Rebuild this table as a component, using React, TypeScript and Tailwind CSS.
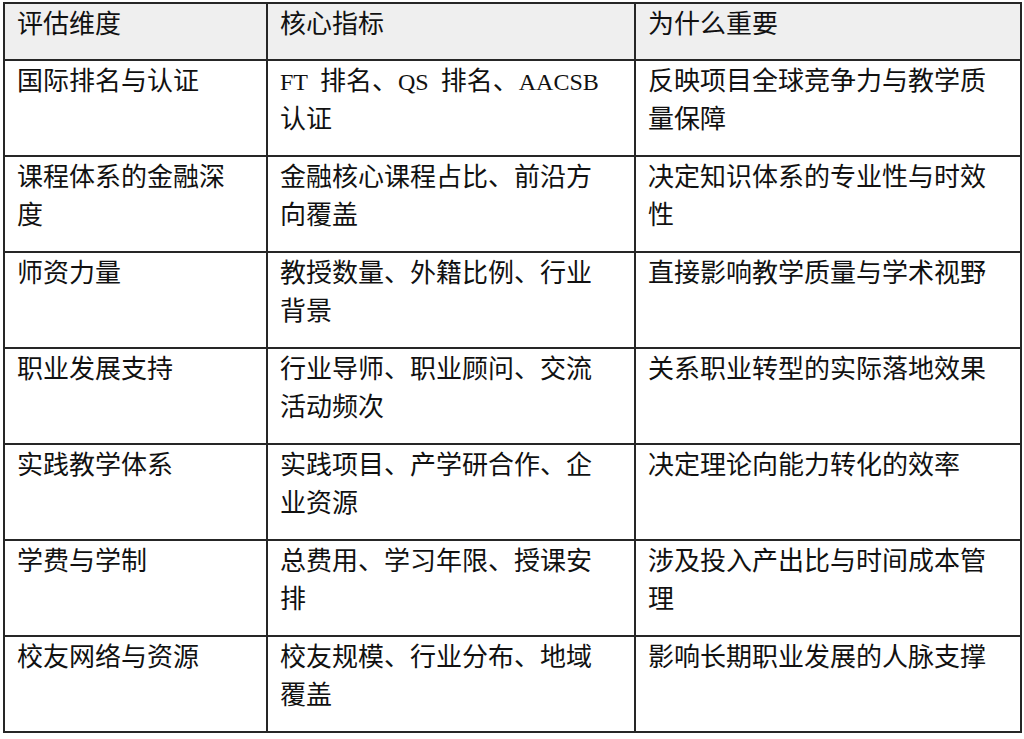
import type { ReactNode } from 'react';

const Lat = ({ children }: { children: ReactNode }) => (
  <span className="text-[24px]">{children}</span>
);
const Sp = () => <span className="inline-block w-[12px]" />;

const rows: [string, ReactNode, string][] = [
  [
    '国际排名与认证',
    <>
      <Lat>FT</Lat>
      <Sp />
      排名、<Lat>QS</Lat>
      <Sp />
      排名、<Lat>AACSB</Lat>
      <Sp />
      认证
    </>,
    '反映项目全球竞争力与教学质量保障',
  ],
  ['课程体系的金融深度', '金融核心课程占比、前沿方向覆盖', '决定知识体系的专业性与时效性'],
  ['师资力量', '教授数量、外籍比例、行业背景', '直接影响教学质量与学术视野'],
  ['职业发展支持', '行业导师、职业顾问、交流活动频次', '关系职业转型的实际落地效果'],
  ['实践教学体系', '实践项目、产学研合作、企业资源', '决定理论向能力转化的效率'],
  ['学费与学制', '总费用、学习年限、授课安排', '涉及投入产出比与时间成本管理'],
  ['校友网络与资源', '校友规模、行业分布、地域覆盖', '影响长期职业发展的人脉支撑'],
];

const cell = 'border-2 border-[#262626] align-top pl-[12px] pr-[20px] pt-[2px] break-all';

export default function App() {
  return (
    <div
      className="min-h-screen bg-white pl-[3px] pt-[2px] text-[26px] leading-[38px] text-[#111]"
      style={{ fontFamily: '"Liberation Serif", "Noto Sans CJK SC", serif' }}
    >
      <table className="table-fixed border-collapse w-[1017px]">
        <colgroup>
          <col className="w-[263px]" />
          <col className="w-[368px]" />
          <col className="w-[386px]" />
        </colgroup>
        <thead>
          <tr className="h-[57px] bg-[#efefef]">
            <th className={`${cell} font-normal text-left`}>评估维度</th>
            <th className={`${cell} font-normal text-left`}>核心指标</th>
            <th className={`${cell} font-normal text-left`}>为什么重要</th>
          </tr>
        </thead>
        <tbody>
          {rows.map((r) => (
            <tr key={r[0]} className="h-[96px]">
              <td className={cell}>{r[0]}</td>
              <td className={cell}>{r[1]}</td>
              <td className={cell}>{r[2]}</td>
            </tr>
          ))}
        </tbody>
      </table>
    </div>
  );
}
